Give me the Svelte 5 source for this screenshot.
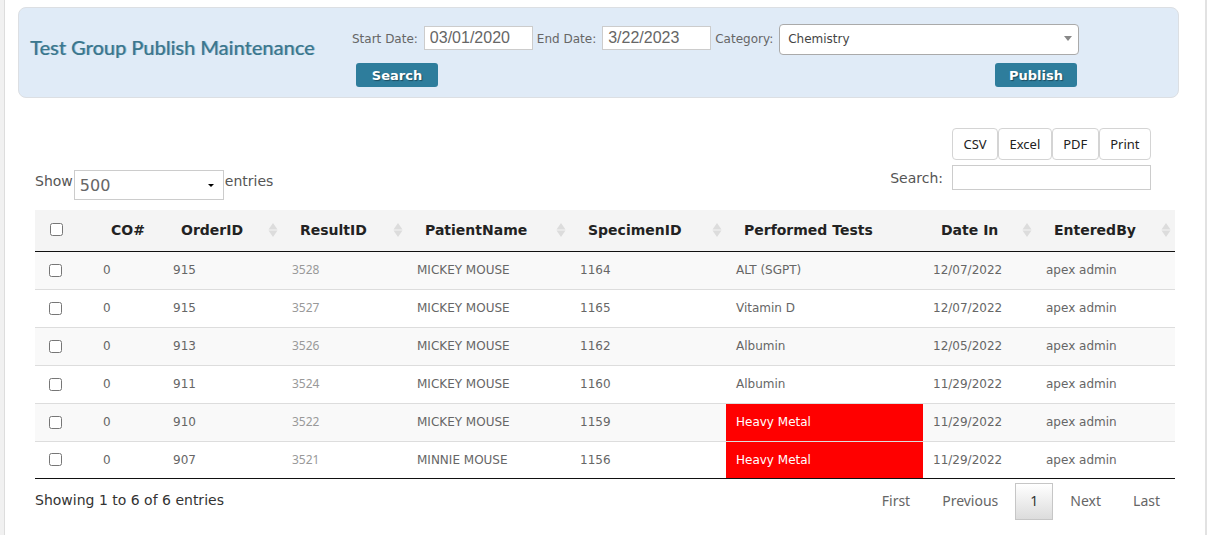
<script>
  let startDate = '03/01/2020'
  let endDate = '3/22/2023'
  let category = 'Chemistry'
  let pageLength = '500'
  let filter = ''

  const exports = ['CSV', 'Excel', 'PDF', 'Print']

  const columns = [
    { label: 'CO#', sortable: false },
    { label: 'OrderID', sortable: true },
    { label: 'ResultID', sortable: true },
    { label: 'PatientName', sortable: true },
    { label: 'SpecimenID', sortable: true },
    { label: 'Performed Tests', sortable: false },
    { label: 'Date In', sortable: true },
    { label: 'EnteredBy', sortable: true }
  ]

  let rows = [
    { co: 0, order: 915, result: 3528, patient: 'MICKEY MOUSE', specimen: 1164, test: 'ALT (SGPT)', date: '12/07/2022', checked: false },
    { co: 0, order: 915, result: 3527, patient: 'MICKEY MOUSE', specimen: 1165, test: 'Vitamin D', date: '12/07/2022', checked: false },
    { co: 0, order: 913, result: 3526, patient: 'MICKEY MOUSE', specimen: 1162, test: 'Albumin', date: '12/05/2022', checked: false },
    { co: 0, order: 911, result: 3524, patient: 'MICKEY MOUSE', specimen: 1160, test: 'Albumin', date: '11/29/2022', checked: false },
    { co: 0, order: 910, result: 3522, patient: 'MICKEY MOUSE', specimen: 1159, test: 'Heavy Metal', date: '11/29/2022', alert: true, checked: false },
    { co: 0, order: 907, result: 3521, patient: 'MINNIE MOUSE', specimen: 1156, test: 'Heavy Metal', date: '11/29/2022', alert: true, checked: false }
  ]

  let allChecked = false

  function toggleAll() {
    rows = rows.map((row) => ({ ...row, checked: allChecked }))
  }

  $: shown = rows.filter((row) =>
    Object.values(row).join(' ').toLowerCase().includes(filter.toLowerCase())
  )
</script>

<main>
  <header class="panel">
    <h1>Test Group Publish Maintenance</h1>
    <form on:submit|preventDefault>
      <div class="fields">
        <label for="start">Start Date:</label>
        <input id="start" type="text" bind:value={startDate} />
        <label for="end">End Date:</label>
        <input id="end" type="text" bind:value={endDate} />
        <label for="category">Category:</label>
        <div class="picker category">
          <select id="category" bind:value={category}>
            <option>Chemistry</option>
            <option>Hematology</option>
            <option>Toxicology</option>
          </select>
        </div>
      </div>
      <div class="actions">
        <button type="submit">Search</button>
        <button type="button">Publish</button>
      </div>
    </form>
  </header>

  <section class="results">
    <div class="toolbar">
      <div class="length">
        <label for="length">Show</label>
        <div class="picker">
          <select id="length" bind:value={pageLength}>
            <option>100</option>
            <option>500</option>
          </select>
        </div>
        <span>entries</span>
      </div>
      <div class="tools">
        <div class="exports">
          {#each exports as name}
          <button type="button">{name}</button>
          {/each}
        </div>
        <label for="filter">Search:</label>
        <input id="filter" type="search" bind:value={filter} />
      </div>
    </div>

    <table>
      <colgroup>
        <col class="c-check" />
        <col class="c-co" />
        <col class="c-order" />
        <col class="c-result" />
        <col class="c-patient" />
        <col class="c-specimen" />
        <col class="c-test" />
        <col class="c-date" />
        <col class="c-by" />
      </colgroup>
      <thead>
        <tr>
          <th class="check">
            <input type="checkbox" aria-label="Select all" bind:checked={allChecked} on:change={toggleAll} />
          </th>
          {#each columns as { label, sortable }}
          <th>
            <div class="head">
              {label}
              {#if sortable}
              <svg width="10" height="16" viewBox="0 0 10 16" aria-hidden="true">
                <path d="M5 1 9.5 7.5h-9zM5 15 .5 8.5h9z" />
              </svg>
              {/if}
            </div>
          </th>
          {/each}
        </tr>
      </thead>
      <tbody>
        {#each shown as row}
        <tr>
          <td class="check">
            <input type="checkbox" aria-label="Select result {row.result}" bind:checked={row.checked} />
          </td>
          <td>{row.co}</td>
          <td>{row.order}</td>
          <td><a href="#{row.result}">{row.result}</a></td>
          <td>{row.patient}</td>
          <td>{row.specimen}</td>
          <td class:alert={row.alert}>{row.test}</td>
          <td>{row.date}</td>
          <td>apex admin</td>
        </tr>
        {/each}
      </tbody>
    </table>

    <footer>
      <p>Showing 1 to {shown.length} of {rows.length} entries</p>
      <nav>
        <button type="button">First</button>
        <button type="button">Previous</button>
        <button type="button" class="current">1</button>
        <button type="button">Next</button>
        <button type="button">Last</button>
      </nav>
    </footer>
  </section>
</main>

<style>
  :global(body) {
    background: #f1f1f1;
    font-family: Verdana, 'DejaVu Sans', sans-serif;
    color: #666;
  }
  main {
    box-sizing: border-box;
    min-height: 100vh;
    margin-left: 4px;
    padding: 7px 0 14px 13px;
    background: #fff;
    border-left: 1px solid #ddd;
    border-right: 2px solid #e2e2e2;
  }
  input,
  select,
  button {
    box-sizing: border-box;
    margin: 0;
  }
  input,
  select {
    color: #666;
    background: #fff;
    border: 1px solid #ccc;
    border-radius: 0;
  }

  .panel {
    display: flex;
    box-sizing: border-box;
    min-height: 91px;
    margin-right: 26px;
    padding: 16px 99px 10px 11px;
    background: #e0ebf7;
    border: 1px solid #dcdfe3;
    border-radius: 8px;
  }
  h1 {
    flex: none;
    width: 322px;
    margin: 9px 0 0;
    font: 500 20px/28px Lato, sans-serif;
    white-space: nowrap;
    color: #3a778e;
    text-shadow: 1px 0 0 rgba(58, 119, 142, 0.4);
  }
  form {
    flex: 1;
  }
  .fields {
    display: flex;
    align-items: center;
    gap: 4px;
    font-size: 12px;
    white-space: nowrap;
  }
  .fields label {
    padding: 0 2px 2px 0;
  }
  .fields input {
    width: 109px;
    height: 24px;
    margin-bottom: 3px;
    padding: 0 5px;
    font: 16px 'Liberation Sans', Arial, sans-serif;
  }
  .picker {
    position: relative;
  }
  .picker::after {
    content: '';
    position: absolute;
    top: 14px;
    right: 10px;
    border: 3px solid transparent;
    border-top-color: #000;
    border-bottom: 0;
    pointer-events: none;
  }
  select {
    appearance: none;
    width: 100%;
    height: 30px;
    padding: 0 5px;
    font: 16px Verdana, 'DejaVu Sans', sans-serif;
  }
  .category {
    flex: 1;
  }
  .category::after {
    top: 12px;
    right: 7px;
    border-width: 5px 4px 0;
    border-top-color: #888;
  }
  .category select {
    height: 31px;
    padding: 0 8px 2px;
    border-color: #aaa;
    border-radius: 4px;
    color: #444;
    font-size: 12px;
  }
  .actions {
    display: flex;
    justify-content: space-between;
    padding: 8px 2px 0 4px;
  }
  .actions button {
    width: 82px;
    height: 24px;
    padding: 0;
    border: 0;
    border-radius: 3px;
    background: #2e7d9c;
    color: #fff;
    font: bold 13px Verdana, 'DejaVu Sans', sans-serif;
    text-shadow: 1px 1px 1px rgba(0, 0, 0, 0.4);
  }

  .results {
    padding: 30px 30px 0 17px;
  }
  .toolbar {
    display: flex;
    justify-content: space-between;
    align-items: flex-end;
    padding: 0 24px 10px 0;
    font-size: 14px;
    color: #555;
  }
  .length {
    display: flex;
    gap: 1px;
  }
  .length label,
  .length span {
    line-height: 22px;
  }
  .length .picker {
    width: 150px;
  }
  .tools {
    display: grid;
    grid-template-columns: auto 199px;
    align-items: center;
    gap: 5px 9px;
    padding-bottom: 10px;
  }
  .exports {
    display: flex;
    grid-column: 2;
  }
  .exports button {
    flex: auto;
    height: 32px;
    padding: 0;
    border: 1px solid #d4d4d4;
    border-radius: 4px;
    background: #fff;
    color: #222;
    font: 13px 'Noto Sans', sans-serif;
  }
  .tools input {
    height: 25px;
  }

  table {
    width: 100%;
    table-layout: fixed;
    border-spacing: 0;
    border-bottom: 1px solid #111;
    font-size: 12px;
  }
  .c-check {
    width: 58px;
  }
  .c-co {
    width: 70px;
  }
  .c-order {
    width: 119px;
  }
  .c-result {
    width: 125px;
  }
  .c-patient {
    width: 163px;
  }
  .c-specimen {
    width: 156px;
  }
  .c-test {
    width: 197px;
  }
  .c-date {
    width: 113px;
  }
  .c-by {
    width: 139px;
  }
  th {
    height: 39px;
    padding: 0 4px 2px 18px;
    border-bottom: 1px solid #111;
    background: #f4f4f4;
    color: #222;
    font-size: 14px;
    text-align: left;
    white-space: nowrap;
  }
  .head {
    display: flex;
    align-items: center;
    justify-content: space-between;
  }
  .head svg {
    flex: none;
    fill: #dcdcdc;
  }
  td {
    height: 35px;
    padding: 0 10px 2px;
    border-top: 1px solid #ddd;
  }
  tbody tr:first-child td {
    border-top: 0;
  }
  tbody tr:last-child td {
    height: 35px;
    padding-bottom: 1px;
  }
  tbody tr:nth-child(odd) {
    background: #f9f9f9;
  }
  td.check {
    padding: 0 0 0 14px;
  }
  th.check {
    padding: 0 0 2px 15px;
  }
  .check input {
    display: block;
    width: 13px;
    height: 13px;
  }
  td a {
    color: #999;
    font-family: 'Noto Sans', sans-serif;
    text-decoration: none;
  }
  td.alert {
    background: #f00;
    color: #fff;
  }

  footer {
    display: flex;
    justify-content: space-between;
    padding-top: 4px;
  }
  footer p {
    margin: 0;
    font-size: 14px;
    line-height: 34px;
    color: #333;
  }
  nav {
    display: flex;
    gap: 2px;
  }
  nav button {
    height: 37px;
    padding: 0 14px 2px;
    border: 1px solid transparent;
    background: none;
    color: #666;
    font: 14px 'Noto Sans', sans-serif;
  }
  nav .current {
    border-color: #c6c6c6;
    background: linear-gradient(#fff, #dcdcdc);
    color: #333;
  }
</style>
